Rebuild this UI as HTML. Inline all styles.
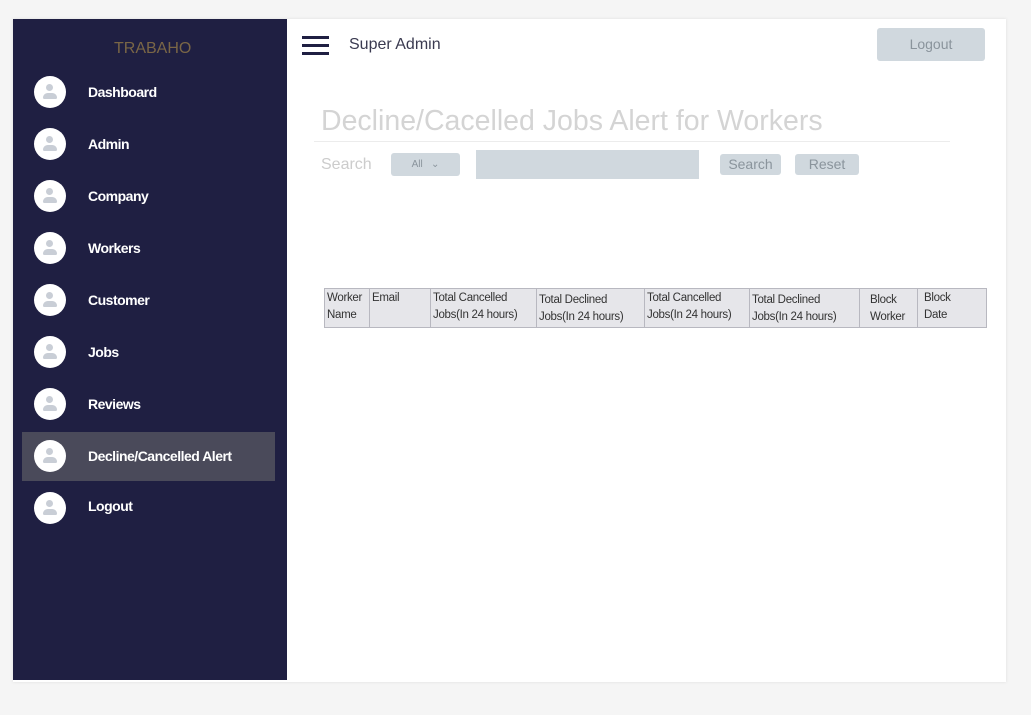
<!DOCTYPE html><html><head><style>
body{margin:0;width:1031px;height:715px;background:#f5f5f5;font-family:"Liberation Sans",sans-serif;position:relative;overflow:hidden}
.a{position:absolute}
.card{left:13px;top:19px;width:993px;height:663px;background:#fff;box-shadow:0 0 3px #ddd}
.side{left:13px;top:19px;width:274px;height:661px;background:#1f1f42}
.ic{position:absolute;left:34px;width:32px;height:32px;border-radius:50%;background:#fff;overflow:hidden}
.ic:before{content:"";position:absolute;left:12px;top:8px;width:7px;height:7px;border-radius:50%;background:#c9ced6}
.ic:after{content:"";position:absolute;left:9px;top:17px;width:14px;height:6px;border-radius:7px 7px 2px 2px;background:#c9ced6}
.it{position:absolute;left:88px;color:#fff;font-size:14px;font-weight:bold;letter-spacing:-.5px}
td{border:1px solid #b8b8c0;background:#e6e6ea;font-size:11.5px;letter-spacing:-.3px;color:#333;vertical-align:top;padding:1px 2px;line-height:17px;white-space:nowrap;overflow:hidden;box-sizing:border-box}
table{border-collapse:collapse;table-layout:fixed}
.btn{background:#d0d8de;color:#8a949c;border-radius:3px;font-size:14px;text-align:center}
</style></head><body>
<div class="a card"></div>
<div class="a side"></div>
<div class="a" style="left:114px;top:40px;color:#7a6646;font-size:16px">TRABAHO</div>
<div class="a" style="left:22px;top:432px;width:253px;height:49px;background:#4a4a5a"></div>
<div class="ic" style="top:76px"></div><div class="it" style="top:84px">Dashboard</div>
<div class="ic" style="top:128px"></div><div class="it" style="top:136px">Admin</div>
<div class="ic" style="top:180px"></div><div class="it" style="top:188px">Company</div>
<div class="ic" style="top:232px"></div><div class="it" style="top:240px">Workers</div>
<div class="ic" style="top:284px"></div><div class="it" style="top:292px">Customer</div>
<div class="ic" style="top:336px"></div><div class="it" style="top:344px">Jobs</div>
<div class="ic" style="top:388px"></div><div class="it" style="top:396px">Reviews</div>
<div class="ic" style="top:440px"></div><div class="it" style="top:448px">Decline/Cancelled Alert</div>
<div class="ic" style="top:492px"></div><div class="it" style="top:498px">Logout</div>
<div class="a" style="left:302px;top:36px;width:27px;height:3px;background:#1f1f42;box-shadow:0 8px 0 #1f1f42,0 16px 0 #1f1f42"></div>
<div class="a" style="left:349px;top:36px;font-size:16px;color:#3a3a50">Super Admin</div>
<div class="a btn" style="left:877px;top:28px;width:108px;height:33px;line-height:32px">Logout</div>
<div class="a" style="left:321px;top:105px;font-size:28.5px;color:#d4d4d4">Decline/Cacelled Jobs Alert for Workers</div>
<div class="a" style="left:314px;top:141px;width:636px;height:1px;background:#ececec"></div>
<div class="a" style="left:321px;top:156px;font-size:16px;color:#ccc">Search</div>
<div class="a btn" style="left:391px;top:153px;width:69px;height:23px;font-size:10px;line-height:23px">All &nbsp;&nbsp;&#8964;</div>
<div class="a" style="left:476px;top:150px;width:223px;height:29px;background:#d0d8de"></div>
<div class="a btn" style="left:720px;top:154px;width:61px;height:21px;line-height:21px">Search</div>
<div class="a btn" style="left:795px;top:154px;width:64px;height:21px;line-height:21px">Reset</div>
<table class="a" style="left:324px;top:288px;width:662px"><tr style="height:36px">
<td style="width:45px">Worker<br>Name</td>
<td style="width:61px">Email</td>
<td style="width:106px">Total Cancelled<br>Jobs(In 24 hours)</td>
<td style="width:108px;padding-top:3px">Total Declined<br>Jobs(In 24 hours)</td>
<td style="width:105px">Total Cancelled<br>Jobs(In 24 hours)</td>
<td style="width:110px;padding-top:3px">Total Declined<br>Jobs(In 24 hours)</td>
<td style="width:58px;padding-left:10px;padding-top:3px">Block<br>Worker</td>
<td style="width:69px;padding-left:6px">Block<br>Date</td>
</tr></table>
</body></html>
